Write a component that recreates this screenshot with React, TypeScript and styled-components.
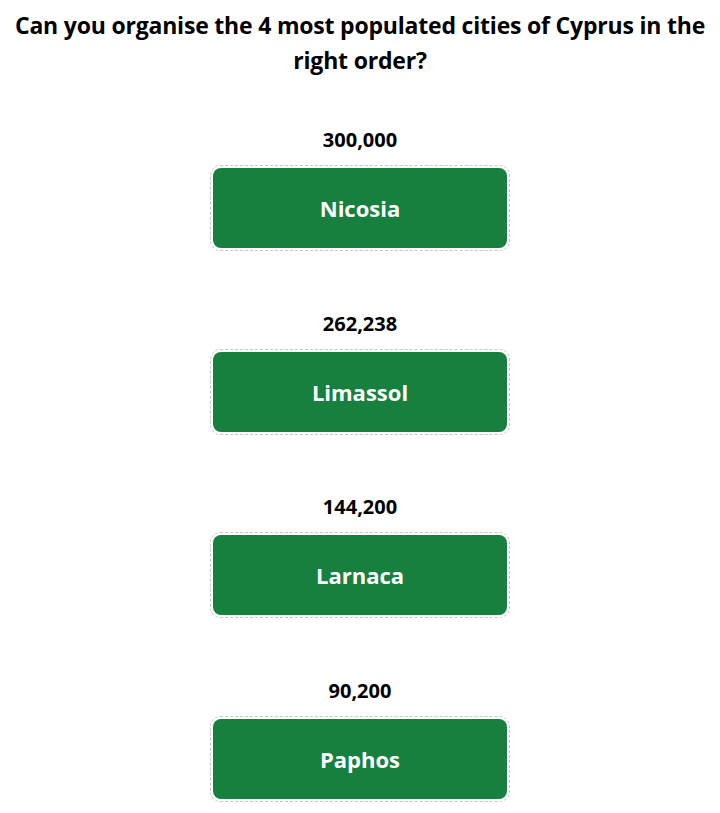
import styled, { createGlobalStyle } from 'styled-components';

const GlobalStyle = createGlobalStyle`
  body {
    margin: 8px;
    background: #ffffff;
    font-family: "Open Sans", "Noto Sans", "DejaVu Sans", sans-serif;
    color: #000000;
  }
`;

const Page = styled.main`
  display: flex;
  flex-direction: column;
  align-items: center;
`;

const Question = styled.h2`
  margin: 0;
  font-size: 23px;
  line-height: 35px;
  font-weight: 700;
  text-align: center;
  letter-spacing: -0.2px;
`;

const CityList = styled.ol`
  list-style: none;
  margin: 50px 0 0;
  padding: 0;
  display: flex;
  flex-direction: column;
  align-items: center;
  gap: 60.67px;
`;

const CityItem = styled.li`
  display: flex;
  flex-direction: column;
  align-items: center;
  gap: 13px;
`;

const Population = styled.span`
  font-size: 20px;
  line-height: 24px;
  font-weight: 700;
`;

const DropSlot = styled.div`
  width: 294px;
  padding: 2px;
  border: 1px dashed #c8c8c8;
  border-radius: 10px;
`;

const CityCard = styled.div`
  height: 80px;
  display: flex;
  align-items: center;
  justify-content: center;
  background: #17803f;
  border-radius: 8px;
  color: #ffffff;
  font-size: 22px;
  font-weight: 700;
  cursor: grab;
`;

const cities = [
  { name: 'Nicosia', population: '300,000' },
  { name: 'Limassol', population: '262,238' },
  { name: 'Larnaca', population: '144,200' },
  { name: 'Paphos', population: '90,200' },
];

export default function App() {
  return (
    <>
      <GlobalStyle />
      <Page>
        <Question>
          Can you organise the 4 most populated cities of Cyprus in the right order?
        </Question>
        <CityList>
          {cities.map((city) => (
            <CityItem key={city.name}>
              <Population>{city.population}</Population>
              <DropSlot>
                <CityCard>{city.name}</CityCard>
              </DropSlot>
            </CityItem>
          ))}
        </CityList>
      </Page>
    </>
  );
}
